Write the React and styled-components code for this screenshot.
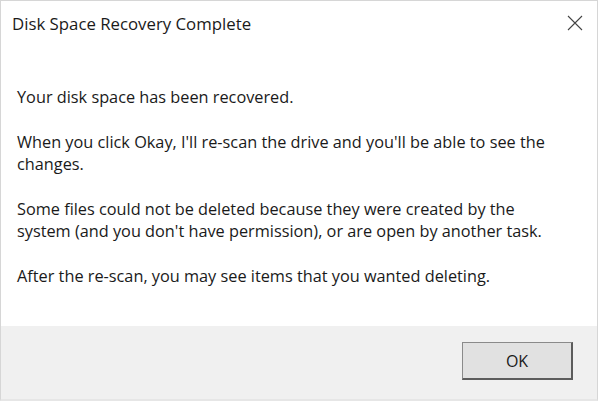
import React from "react";
import styled, { createGlobalStyle } from "styled-components";

const GlobalStyle = createGlobalStyle`
  html, body {
    margin: 0;
    padding: 0;
    background: #ffffff;
  }
  body {
    font-family: "Open Sans", "Noto Sans", "Liberation Sans", sans-serif;
  }
`;

const Window = styled.div`
  width: 596px;
  height: 398px;
  display: flex;
  flex-direction: column;
  background: #ffffff;
  border: 1px solid #d6d6d6;
  border-bottom: 2px solid #e6e6e6;
  box-sizing: content-box;
`;

const TitleBar = styled.div`
  height: 44px;
  display: flex;
  align-items: center;
  justify-content: space-between;
  padding: 0 0 0 11px;
`;

const Title = styled.h1`
  margin: 0;
  font-size: 16.8px;
  font-weight: 400;
  color: #1a1a1a;
`;

const CloseButton = styled.button`
  width: 44px;
  height: 44px;
  display: flex;
  align-items: center;
  justify-content: center;
  border: none;
  background: transparent;
  padding: 0;
`;

const Body = styled.div`
  flex: 1;
  padding: 41px 16px 0 16px;
`;

const Paragraph = styled.p`
  margin: 0 0 22.4px 0;
  font-size: 16.3px;
  line-height: 22.4px;
  color: #1a1a1a;
  white-space: nowrap;
`;

const Footer = styled.div`
  height: 73px;
  background: #f0f0f0;
  display: flex;
  align-items: flex-start;
  justify-content: flex-end;
  padding: 16px 24px 0 0;
  box-sizing: border-box;
`;

const Button = styled.button`
  width: 111px;
  height: 38px;
  background: #e1e1e1;
  border: 1px solid #8a8a8a;
  border-right: 2px solid #5c5c5c;
  border-bottom: 2px solid #5c5c5c;
  font-family: "Open Sans", "Noto Sans", sans-serif;
  font-size: 16px;
  color: #1a1a1a;
  padding: 0;
`;

export default function App() {
  return (
    <>
      <GlobalStyle />
      <Window>
        <TitleBar>
          <Title>Disk Space Recovery Complete</Title>
          <CloseButton aria-label="Close">
            <svg width="16" height="16" viewBox="0 0 16 16">
              <path d="M1 1 L15 15 M15 1 L1 15" stroke="#444" strokeWidth="1.1" fill="none" />
            </svg>
          </CloseButton>
        </TitleBar>
        <Body>
          <Paragraph>Your disk space has been recovered.</Paragraph>
          <Paragraph>
            When you click Okay, I'll re-scan the drive and you'll be able to see the
            <br />
            changes.
          </Paragraph>
          <Paragraph>
            Some files could not be deleted because they were created by the
            <br />
            system (and you don't have permission), or are open by another task.
          </Paragraph>
          <Paragraph>After the re-scan, you may see items that you wanted deleting.</Paragraph>
        </Body>
        <Footer>
          <Button>OK</Button>
        </Footer>
      </Window>
    </>
  );
}
